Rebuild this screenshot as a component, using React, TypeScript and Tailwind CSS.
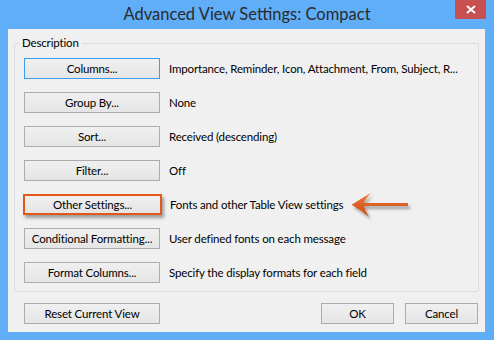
import React from "react";

const font = { fontFamily: 'Lato, "Noto Sans", sans-serif' };

function Btn({
  label,
  w = "w-[136px]",
  variant = "normal",
}: {
  label: string;
  w?: string;
  variant?: "normal" | "default" | "highlight";
}) {
  const border =
    variant === "default"
      ? "border border-[#3c9cf0]"
      : variant === "highlight"
      ? "border-2 border-[#e2571a] shadow-[2px_3px_3px_rgba(0,0,0,0.35)] -mx-[1px] w-[139px]"
      : "border border-[#acacac]";
  return (
    <div
      className={`${variant === "highlight" ? "" : w} h-[21px] shrink-0 flex items-center justify-center whitespace-nowrap bg-gradient-to-b from-[#f0f0f0] to-[#e5e5e5] text-[11.5px] tracking-[-0.15px] text-black leading-none ${border}`}
    >
      {label}
    </div>
  );
}

const rows: { label: string; desc: string; variant?: "normal" | "default" | "highlight" }[] = [
  { label: "Columns...", desc: "Importance, Reminder, Icon, Attachment, From, Subject, R...", variant: "default" },
  { label: "Group By...", desc: "None" },
  { label: "Sort...", desc: "Received (descending)" },
  { label: "Filter...", desc: "Off" },
  { label: "Other Settings...", desc: "Fonts and other Table View settings", variant: "highlight" },
  { label: "Conditional Formatting...", desc: "User defined fonts on each message" },
  { label: "Format Columns...", desc: "Specify the display formats for each field" },
];

export default function App() {
  return (
    <div
      className="relative w-[494px] h-[340px] bg-[#60aef8] flex flex-col overflow-hidden"
      style={font}
    >
      {/* title bar */}
      <div className="relative h-[29px] shrink-0 flex items-center justify-center">
        <span className="text-[16.5px] text-[#2b2b2b] leading-none pb-[1px]">
          Advanced View Settings: Compact
        </span>
        <div className="absolute right-[8px] top-0 w-[31px] h-[19px] bg-[#c75050] flex items-center justify-center">
          <svg width="10" height="9" viewBox="0 0 10 9">
            <path d="M1 1 L9 8 M9 1 L1 8" stroke="#fff" strokeWidth="2" />
          </svg>
        </div>
      </div>

      {/* client */}
      <div className="flex-1 ml-[8px] mr-[9px] mb-[8px] bg-[#f0f0f0] flex flex-col px-[6px] pt-[6px]">
        <fieldset className="border border-[#dcdcdc] rounded-[2px] pl-[9px] pt-[7px] pb-[8px] flex flex-col gap-[13px]">
          <legend className="-ml-[5px] px-[3px] text-[11.5px] tracking-[-0.15px] leading-[16px] text-black">
            Description
          </legend>
          {rows.map((r) => (
            <div key={r.label} className="flex items-center gap-[9px] h-[21px]">
              <Btn label={r.label} variant={r.variant} />
              <span className="text-[11.5px] tracking-[-0.15px] text-black whitespace-nowrap leading-none">
                {r.desc}
              </span>
            </div>
          ))}
        </fieldset>
        <div className="mt-[11px] flex items-center ml-[10px] mr-[1px]">
          <Btn label="Reset Current View" />
          <div className="flex-1" />
          <Btn label="OK" w="w-[73px]" />
          <div className="w-[11px]" />
          <Btn label="Cancel" w="w-[73px]" />
        </div>
      </div>

      {/* annotation arrow */}
      <svg
        className="absolute left-[345px] top-[188px]"
        width="75"
        height="36"
        viewBox="345 188 75 36"
      >
        <defs>
          <filter id="sh" x="-20%" y="-40%" width="150%" height="190%">
            <feDropShadow dx="2" dy="3" stdDeviation="1.5" floodColor="#000" floodOpacity="0.35" />
          </filter>
          <linearGradient id="og" x1="0" y1="0" x2="0" y2="1">
            <stop offset="0" stopColor="#f07a3a" />
            <stop offset="1" stopColor="#c9480f" />
          </linearGradient>
        </defs>
        <path
          d="M352 204.5 Q362 198 371 193 Q365 199 364 203 L408 203 L408 206 L364 206 Q365 211 369 217 Q361 210 352 205 Z"
          fill="url(#og)"
          filter="url(#sh)"
        />
      </svg>
    </div>
  );
}
